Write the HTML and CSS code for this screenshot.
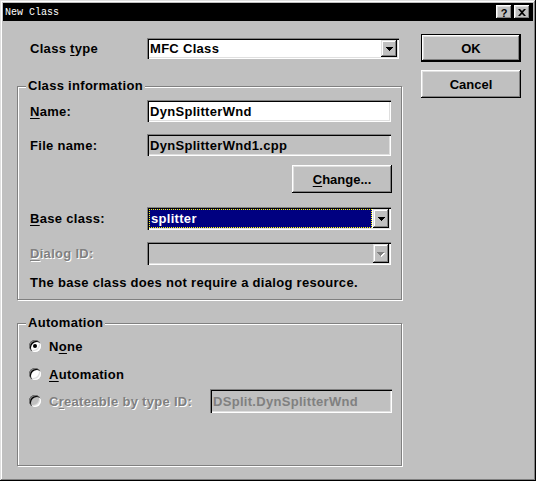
FILE: index.html
```html
<!DOCTYPE html>
<html>
<head>
<meta charset="utf-8">
<title>New Class</title>
<link rel="stylesheet" href="styles.css">
</head>
<body>
<div class="window">
  <div class="titlebar">
    <span class="title">New Class</span>
    <div class="caption-btns">
      <span class="cbtn help">?</span>
      <span class="cbtn close"><svg width="8" height="7" viewBox="0 0 8 7"><path d="M0 0h2l2 2 2-2h2L5 3.5 8 7H6L4 5 2 7H0l3-3.5z" fill="#000"/></svg></span>
    </div>
  </div>
  <div class="body">
    <div class="main">
      <div class="row row-type">
        <span class="lbl lbl-top">Class <u>t</u>ype</span>
        <div class="field combo combo-type">
          <span class="field-text">MFC Class</span>
          <span class="drop"><svg width="7" height="4" viewBox="0 0 7 4"><path d="M0 0h7v1H0zM1 1h5v1H1zM2 2h3v1H2zM3 3h1v1H3z" fill="#000"/></svg></span>
        </div>
      </div>

      <div class="group group-info">
        <span class="legend">Class information</span>
        <div class="row row-name">
          <span class="lbl"><u>N</u>ame:</span>
          <div class="field edit edit-name"><span class="field-text">DynSplitterWnd</span></div>
        </div>
        <div class="row row-file">
          <span class="lbl">File name:</span>
          <div class="field edit ro edit-file"><span class="field-text">DynSplitterWnd1.cpp</span></div>
        </div>
        <div class="row row-change">
          <button class="btn"><u>C</u>hange...</button>
        </div>
        <div class="row row-base">
          <span class="lbl"><u>B</u>ase class:</span>
          <div class="field combo combo-wide">
            <span class="sel"><span class="sel-text">splitter</span></span>
            <span class="drop"><svg width="7" height="4" viewBox="0 0 7 4"><path d="M0 0h7v1H0zM1 1h5v1H1zM2 2h3v1H2zM3 3h1v1H3z" fill="#000"/></svg></span>
          </div>
        </div>
        <div class="row row-dlg">
          <span class="lbl disabled"><u>D</u>ialog ID:</span>
          <div class="field combo combo-wide ro">
            <span class="field-text"></span>
            <span class="drop"><svg width="8" height="5" viewBox="0 0 8 5"><path d="M1 1h7v1H1zM2 2h5v1H2zM3 3h3v1H3zM4 4h1v1H4z" fill="#fff"/><path d="M0 0h7v1H0zM1 1h5v1H1zM2 2h3v1H2zM3 3h1v1H3z" fill="#808080"/></svg></span>
          </div>
        </div>
        <p class="note">The base class does not require a dialog resource.</p>
      </div>

      <div class="group group-auto">
        <span class="legend">Automation</span>
        <div class="radio-row row-none">
          <span class="radio checked"></span>
          <span class="radio-lbl">N<u>o</u>ne</span>
        </div>
        <div class="radio-row row-autom">
          <span class="radio"></span>
          <span class="radio-lbl"><u>A</u>utomation</span>
        </div>
        <div class="radio-row row-create">
          <span class="radio off"></span>
          <span class="radio-lbl disabled">C<u>r</u>eateable by type ID:</span>
          <div class="field edit ro edit-create"><span class="field-text disabled-text">DSplit.DynSplitterWnd</span></div>
        </div>
      </div>
    </div>

    <div class="side">
      <button class="btn default">OK</button>
      <button class="btn btn-cancel">Cancel</button>
    </div>
  </div>
</div>
</body>
</html>
```

FILE: styles.css
```css
* { box-sizing: border-box; margin: 0; padding: 0; }
html, body { width: 536px; height: 481px; overflow: hidden; }
body {
  background: #c0c0c0;
  font: bold 13px "Liberation Sans", Arial, sans-serif;
  letter-spacing: 0.3px;
  color: #000;
}
u { text-decoration: underline; text-underline-offset: 2px; text-decoration-thickness: 1px; }

.window {
  width: 536px;
  height: 481px;
  padding: 3px;
  background: #c0c0c0;
  box-shadow: inset -1px -1px #000, inset 1px 1px #dfdfdf, inset -2px -2px #808080, inset 2px 2px #fff;
  display: flex;
  flex-direction: column;
}

.titlebar {
  height: 18px;
  background: #000;
  color: #fff;
  display: flex;
  align-items: center;
  justify-content: space-between;
  padding: 0 3px 0 2px;
}
.title { font: normal 10px "Liberation Mono", "DejaVu Sans Mono", monospace; letter-spacing: 0; }
.caption-btns { display: flex; gap: 2px; }
.cbtn {
  width: 16px;
  height: 14px;
  background: #c0c0c0;
  color: #000;
  display: flex;
  align-items: center;
  justify-content: center;
  box-shadow: inset -1px -1px #000, inset 1px 1px #fff, inset -2px -2px #808080, inset 2px 2px #dfdfdf;
  font: bold 11px "Liberation Sans", Arial, sans-serif;
  letter-spacing: 0;
}
.cbtn.help { padding-top: 1px; }

.body { display: flex; flex: 1; }
.main { width: 385px; margin-left: 14px; display: flex; flex-direction: column; }
.side { width: 100px; margin-left: 19px; display: flex; flex-direction: column; }

.row { display: flex; align-items: center; }
.lbl { width: 129px; padding-left: 12px; }
.lbl-top { width: 130px; padding-left: 13px; }

.row-type { margin-top: 17px; height: 21px; }

.field {
  position: relative;
  height: 22px;
  background: #fff;
  box-shadow: inset 1px 1px #808080, inset 2px 2px #000, inset -1px -1px #fff, inset -2px -2px #dfdfdf;
  display: flex;
  align-items: center;
  padding: 2px;
}
.field.ro { background: #c0c0c0; }
.field-text { padding-left: 1px; flex: 1; white-space: nowrap; }
.combo-type { width: 252px; height: 21px; }
.edit-name, .edit-file, .combo-wide { width: 244px; }
.drop {
  width: 16px;
  align-self: stretch;
  background: #c0c0c0;
  box-shadow: inset -1px -1px #000, inset 1px 1px #dfdfdf, inset -2px -2px #808080, inset 2px 2px #fff;
  display: flex;
  align-items: center;
  justify-content: center;
  padding-top: 1px;
}
.combo-wide { height: 23px; }
.sel {
  flex: 1;
  align-self: stretch;
  margin-right: 1px;
  background: #000080;
  color: #fff;
  border: 1px dotted #ffff00;
  display: flex;
  align-items: center;
}
.sel-text { padding-left: 1px; }

.group {
  position: relative;
  border: 1px solid #808080;
  box-shadow: 1px 1px 0 #fff, inset 1px 1px 0 #fff;
}
.legend {
  position: absolute;
  top: -9px;
  left: 8px;
  padding: 0 2px;
  background: #c0c0c0;
  line-height: 16px;
}
.group-info { margin-top: 27px; height: 214px; }
.row-name { margin-top: 13px; }
.row-file { margin-top: 12px; }
.row-change { margin-top: 9px; justify-content: flex-end; padding-right: 9px; }
.row-base { margin-top: 14px; }
.row-dlg { margin-top: 12px; }
.note { margin-top: 10px; padding-left: 12px; line-height: 16px; }

.disabled { color: #808080; text-shadow: 1px 1px 0 #fff; }
.disabled-text { color: #808080; }

.group-auto { margin-top: 23px; height: 143px; }
.radio-row { display: flex; align-items: center; padding-left: 11px; height: 16px; }
.row-none { margin-top: 14px; }
.row-autom { margin-top: 12px; }
.row-create { margin-top: 7px; height: 24px; padding-right: 9px; }
.radio {
  width: 12px;
  height: 12px;
  border-radius: 50%;
  background: #fff;
  box-shadow: inset 1px 1px #808080, inset 2px 2px #000, inset -1px -1px #fff, inset -2px -2px #dfdfdf;
  display: flex;
  align-items: center;
  justify-content: center;
  flex: none;
}
.radio.off { background: #c0c0c0; }
.radio.checked::after {
  content: "";
  width: 4px;
  height: 4px;
  border-radius: 50%;
  background: #000;
}
.radio-lbl { margin-left: 8px; }
.edit-create { margin-left: auto; width: 182px; height: 24px; }

.btn {
  width: 100px;
  height: 28px;
  border: none;
  background: #c0c0c0;
  font: inherit;
  color: #000;
  box-shadow: inset -1px -1px #000, inset 1px 1px #fff, inset -2px -2px #808080, inset 2px 2px #dfdfdf;
}
.btn.default {
  margin-top: 13px;
  border: 1px solid #000;
  box-shadow: inset -1px -1px #000, inset 1px 1px #fff, inset -2px -2px #808080, inset 2px 2px #dfdfdf;
}
.btn-cancel { margin-top: 8px; }
```
